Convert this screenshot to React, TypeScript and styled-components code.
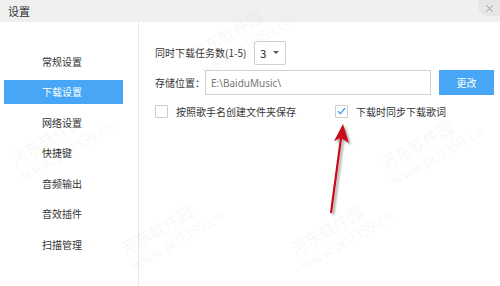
import React from "react";
import styled, { createGlobalStyle } from "styled-components";

const GlobalStyle = createGlobalStyle`
  html, body {
    margin: 0;
    padding: 0;
    background: #ffffff;
    font-family: "Noto Sans CJK SC", "Noto Sans", sans-serif;
    font-size: 10px;
    color: #333333;
  }
`;

const Blue = "#47a6f6";

const Window = styled.div`
  position: relative;
  width: 500px;
  height: 286px;
  overflow: hidden;
  display: flex;
  flex-direction: column;
  background: #fff;
`;

const TitleBar = styled.div`
  position: relative;
  height: 22px;
  flex: none;
  background: #f0f0f0;
  display: flex;
  align-items: center;
  padding-left: 8px;
  font-size: 11px;
  color: #333;
`;

const CloseButton = styled.div`
  position: absolute;
  right: 0;
  top: 0;
  width: 22px;
  height: 16px;
  border-bottom-left-radius: 10px;
  background: #e6e6e6;
  display: flex;
  align-items: center;
  justify-content: center;
`;

const Body = styled.div`
  flex: 1;
  display: flex;
`;

const Sidebar = styled.div`
  width: 138px;
  flex: none;
  border-right: 1px solid #e8e8e8;
  padding-top: 27px;
  display: flex;
  flex-direction: column;
  gap: 6.6px;
`;

const NavItem = styled.div<{ $active?: boolean }>`
  height: 24px;
  margin-left: 4px;
  width: 119px;
  padding-left: 38px;
  box-sizing: border-box;
  display: flex;
  align-items: center;
  background: ${(p) => (p.$active ? Blue : "transparent")};
  color: ${(p) => (p.$active ? "#fff" : "#333")};
`;

const Content = styled.div`
  flex: 1;
  padding: 18px 7px 0 16px;
  display: flex;
  flex-direction: column;
`;

const Row = styled.div`
  display: flex;
  align-items: center;
  height: 25px;
  margin-bottom: 5px;
`;

const Label = styled.span<{ $gap?: number }>`
  color: #333;
  margin-right: ${(p) => p.$gap ?? 0}px;
  white-space: nowrap;
`;

const Select = styled.div`
  width: 32px;
  height: 24px;
  box-sizing: border-box;
  border: 1px solid #cfcfcf;
  border-radius: 2px;
  display: flex;
  align-items: center;
  justify-content: space-between;
  padding: 0 6px 0 5px;
  color: #222;
  font-size: 11px;
`;

const Caret = styled.span`
  width: 0;
  height: 0;
  border-left: 3px solid transparent;
  border-right: 3px solid transparent;
  border-top: 3.5px solid #555;
`;

const PathInput = styled.div`
  width: 226px;
  height: 25px;
  box-sizing: border-box;
  border: 1px solid #d2d2d2;
  display: flex;
  align-items: center;
  padding-left: 5px;
  color: #777;
  font-family: "Noto Sans", "Open Sans", sans-serif;
  font-size: 10px;
`;

const Button = styled.div`
  margin-left: 8px;
  width: 55px;
  height: 25px;
  background: ${Blue};
  color: #fff;
  display: flex;
  align-items: center;
  justify-content: center;
`;

const CheckRow = styled.div`
  display: flex;
  align-items: center;
  margin-top: 1px;
  height: 20px;
`;

const CheckItem = styled.label<{ $width?: number }>`
  display: flex;
  align-items: center;
  width: ${(p) => (p.$width ? `${p.$width}px` : "auto")};
`;

const Box = styled.span`
  width: 13px;
  height: 13px;
  box-sizing: border-box;
  border: 1px solid #cccccc;
  border-radius: 1px;
  margin-right: 8px;
  display: flex;
  align-items: center;
  justify-content: center;
`;

const Watermark = styled.div`
  position: absolute;
  color: rgba(150, 150, 150, 0.09);
  font-family: "Liberation Serif", "Noto Sans CJK SC", serif;
  font-size: 16px;
  transform: rotate(-30deg);
  white-space: nowrap;
  pointer-events: none;
  line-height: 1.1;
`;

const ArrowLayer = styled.svg`
  position: absolute;
  left: 0;
  top: 0;
  pointer-events: none;
`;

const marks = [
  { x: 10, y: 125 },
  { x: 190, y: 20 },
  { x: 120, y: 215 },
  { x: 380, y: 130 },
  { x: 290, y: 215 },
];

export default function App() {
  const nav = ["常规设置", "下载设置", "网络设置", "快捷键", "音频输出", "音效插件", "扫描管理"];
  return (
    <>
      <GlobalStyle />
      <Window>
        <TitleBar>
          设置
          <CloseButton>
            <svg width="7" height="7" viewBox="0 0 7 7">
              <path d="M0.5 0.5 L6.5 6.5 M6.5 0.5 L0.5 6.5" stroke="#999" strokeWidth="1" />
            </svg>
          </CloseButton>
        </TitleBar>
        <Body>
          <Sidebar>
            {nav.map((n) => (
              <NavItem key={n} $active={n === "下载设置"}>
                {n}
              </NavItem>
            ))}
          </Sidebar>
          <Content>
            <Row>
              <Label $gap={8}>同时下载任务数(1-5)</Label>
              <Select>
                3
                <Caret />
              </Select>
            </Row>
            <Row>
              <Label>存储位置：</Label>
              <PathInput>E:\BaiduMusic\</PathInput>
              <Button>更改</Button>
            </Row>
            <CheckRow>
              <CheckItem $width={180}>
                <Box />
                按照歌手名创建文件夹保存
              </CheckItem>
              <CheckItem>
                <Box>
                  <svg width="9" height="8" viewBox="0 0 9 8">
                    <path d="M1 4.2 L3.5 6.6 L8 1" fill="none" stroke="#4aa3f0" strokeWidth="1.4" />
                  </svg>
                </Box>
                下载时同步下载歌词
              </CheckItem>
            </CheckRow>
          </Content>
        </Body>
        {marks.map((m, i) => (
          <Watermark key={i} style={{ left: m.x, top: m.y }}>
            河东软件园
            <br />
            www.pc0359.cn
          </Watermark>
        ))}
        <ArrowLayer width="500" height="286">
          <defs>
            <filter id="sh" x="-50%" y="-50%" width="200%" height="200%">
              <feDropShadow dx="2" dy="2" stdDeviation="1.2" floodColor="#000" floodOpacity="0.35" />
            </filter>
          </defs>
          <g filter="url(#sh)">
            <line x1="331" y1="213" x2="341" y2="138" stroke="#c8101a" strokeWidth="2.2" />
            <polygon points="343,124 349,143 341,138 334,141" fill="#c8101a" />
          </g>
        </ArrowLayer>
      </Window>
    </>
  );
}
